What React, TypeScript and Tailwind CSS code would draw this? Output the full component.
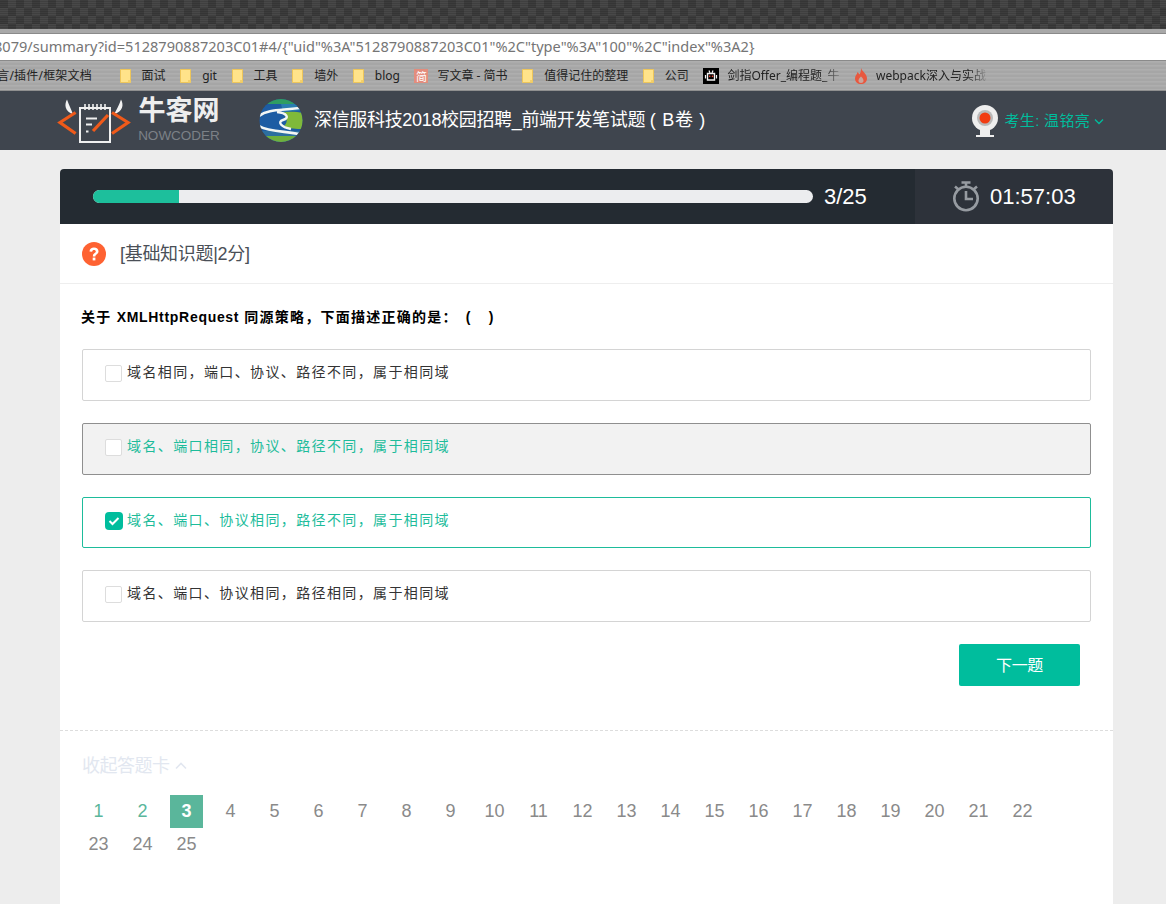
import React from "react";

const FONT = "font-['Liberation_Sans','Noto_Sans_CJK_SC',sans-serif]";

function Folder() {
  return (
    <svg width="11" height="14" viewBox="0 0 11 14" className="shrink-0">
      <path d="M0.5 0.5H10.5V13.5H0.5Z" fill="#ffe38a" stroke="#eec65a" />
      <path d="M8 11H10.5V13.5H8Z" fill="#f3cf6a" />
    </svg>
  );
}

function Bookmark({
  icon,
  label,
  className = "",
  labelClass = "",
}: {
  icon?: React.ReactNode;
  label: string;
  className?: string;
  labelClass?: string;
}) {
  return (
    <div className={`flex items-center gap-[11px] shrink-0 ${className}`}>
      {icon}
      <span className={`whitespace-nowrap ${labelClass}`}>{label}</span>
    </div>
  );
}

function Logo() {
  return (
    <svg width="74" height="46" viewBox="0 0 74 46" className="shrink-0">
      <path d="M10 1.5C7 7 8 13 16 16.5C14 11 12 7 10 1.5Z" fill="#f2f2f2" />
      <path d="M64 1.5C67 7 66 13 57 16.5C60 11 62 7 64 1.5Z" fill="#f2f2f2" />
      <path d="M18.6 14.5L3 24.5L18.6 35.5" fill="none" stroke="#f05a1a" strokeWidth="3.2" />
      <path d="M55 14.5L71 24.5L55 35.5" fill="none" stroke="#f05a1a" strokeWidth="3.2" />
      <path d="M23 10V44H53V10Z" fill="none" stroke="#f0f0f0" strokeWidth="2" />
      <path d="M28 6V12M32 6V12M36 6V12M40 6V12M44 6V12M48 6V12" stroke="#f0f0f0" strokeWidth="1.6" />
      <path d="M29 20.5H40M29 26.5H35M29 33.5H31.5" stroke="#f0f0f0" strokeWidth="2" fill="none" />
      <path d="M36 33L51 17" stroke="#f05a1a" strokeWidth="3.2" />
    </svg>
  );
}

function Globe() {
  return (
    <svg width="45" height="45" viewBox="0 0 45 45" className="shrink-0">
      <defs>
        <clipPath id="globe-clip">
          <circle cx="22" cy="22.5" r="21.5" />
        </clipPath>
      </defs>
      <g clipPath="url(#globe-clip)">
        <rect width="45" height="45" fill="#1d5ca3" />
        <rect x="0" y="0" width="45" height="6" fill="#2f9d62" />
        <path d="M22 6H45V12L24 14Z" fill="#2a7db0" />
        <path d="M22 15C30 13 38 14 45 15V31C38 31 31 31 25 28C29 25 29 18 22 15Z" fill="#7fb93a" />
        <rect x="0" y="33" width="45" height="12" fill="#2d6f9f" />
        <path d="M4 38H45V45H4Z" fill="#6fb03c" />
        <path d="M0 18C10 10 26 13 45 9" fill="none" stroke="#f3f6f4" strokeWidth="2.6" />
        <path d="M0 28C10 34 28 33 45 37" fill="none" stroke="#f3f6f4" strokeWidth="2.6" />
        <path d="M18 14C28 15 31 20 24 22C18 24 22 29 32 31" fill="none" stroke="#f3f6f4" strokeWidth="2.4" />
      </g>
    </svg>
  );
}

function Webcam() {
  return (
    <svg width="28" height="32" viewBox="0 0 28 32" className="shrink-0">
      <circle cx="14" cy="13" r="13" fill="#eeeeee" />
      <circle cx="14" cy="13" r="8" fill="#b9b9b9" />
      <circle cx="14" cy="13" r="5.5" fill="#f23c12" />
      <path d="M9 25V30H5V32H23V30H19V25Z" fill="#eeeeee" />
    </svg>
  );
}

function Timer() {
  return (
    <svg width="26" height="31" viewBox="0 0 26 31" className="shrink-0" fill="none" stroke="#969ba1" strokeWidth="2.6">
      <circle cx="13" cy="17.5" r="11.7" />
      <path d="M13 10V18H20" />
      <path d="M8.5 1.5H17.5M13 1.5V5.5" />
      <path d="M2 5.5L5.5 8.5M24 5.5L20.5 8.5" />
    </svg>
  );
}

function Option({ text, kind }: { text: string; kind: "plain" | "hover" | "checked" }) {
  const box =
    kind === "hover"
      ? "border-[#8f8f8f] bg-[#f2f2f2] h-[52px]"
      : kind === "checked"
      ? "border-[#1dbc9b] bg-white h-[51px]"
      : "border-[#d4d4d4] bg-white h-[52px]";
  const color = kind === "plain" ? "text-[#333333]" : "text-[#1dbc9b]";
  return (
    <div className={`flex items-center border rounded-[2px] pl-[22px] pb-[3px] ${box}`}>
      {kind === "checked" ? (
        <span className="flex items-center justify-center w-[18px] h-[18px] rounded-[4px] bg-[#00bd9d] shrink-0">
          <svg width="12" height="10" viewBox="0 0 12 10" fill="none" stroke="#ffffff" strokeWidth="2">
            <path d="M1.5 5L4.5 8L10.5 2" />
          </svg>
        </span>
      ) : (
        <span className="w-[17px] h-[17px] mr-[1px] rounded-[2px] border border-[#dddddd] bg-white shrink-0" />
      )}
      <span
        className={`ml-[4px] text-[14px] tracking-[1.38px] leading-[20px] whitespace-nowrap ${color} ${
          kind === "checked" ? "mb-[2px]" : "mb-[4px]"
        }`}
      >
        {text}
      </span>
    </div>
  );
}

export default function App() {
  const nums = Array.from({ length: 25 }, (_, i) => i + 1);
  return (
    <div className={`h-[904px] w-[1166px] overflow-hidden bg-[#ededed] ${FONT}`}>
      {/* browser chrome */}
      <div className="h-[29px] bg-[#3d3d3d] bg-[repeating-linear-gradient(0deg,rgba(0,0,0,0.12)_0_1px,transparent_1px_2px),conic-gradient(#484848_25%,#3c3c3c_0_50%,#484848_0_75%,#3c3c3c_0)] bg-[length:2px_2px,16px_16px]" />
      <div className="h-[4px] bg-[#a8a8a8]" />
      <div className="h-[28px] bg-white border-y border-[#8a8a8a] flex items-center overflow-hidden">
        <span className="ml-[-6px] whitespace-nowrap text-[14.56px] text-[#757575] font-['Noto_Sans',sans-serif]">
          {'8079/summary?id=5128790887203C01#4/{"uid"%3A"5128790887203C01"%2C"type"%3A"100"%2C"index"%3A2}'}
        </span>
      </div>
      <div className="h-[30px] pt-[1px] bg-[#a9a9a9] bg-[repeating-linear-gradient(0deg,#aeaeae_0_1px,#a6a6a6_1px_3px,#ababab_3px_4px)] flex items-center gap-[14.6px] text-[12px] text-[#222222] overflow-hidden whitespace-nowrap border-b border-[#8f8f8f] font-['Noto_Sans','Noto_Sans_CJK_SC',sans-serif]">
        <div className="-ml-[15px] shrink-0 tracking-[0.2px]">{"语言/插件/框架文档"}</div>
        <Bookmark icon={<Folder />} label="面试" className="ml-[13px]" />
        <Bookmark icon={<Folder />} label="git" />
        <Bookmark icon={<Folder />} label="工具" />
        <Bookmark icon={<Folder />} label="墙外" />
        <Bookmark icon={<Folder />} label="blog" />
        <Bookmark
          icon={
            <span className="flex items-center justify-center w-[14px] h-[14px] bg-[#e38d7d] text-[11px] leading-none text-white">简</span>
          }
          label="写文章 - 简书"
          className="!gap-[9px]"
        />
        <Bookmark icon={<Folder />} label="值得记住的整理" />
        <Bookmark icon={<Folder />} label="公司" />
        <Bookmark
          icon={
            <svg width="16" height="16" viewBox="0 0 16 16" className="shrink-0">
              <rect width="16" height="16" fill="#000000" />
              <path d="M4.5 5.5H11.5V12H4.5Z" fill="none" stroke="#f2f2f2" strokeWidth="1.4" />
              <path d="M6 2.5L7 5M10 2.5L9 5" stroke="#f2f2f2" strokeWidth="1.2" />
              <path d="M2.5 7V10.5M13.5 7V10.5" stroke="#f2f2f2" strokeWidth="1.2" />
              <rect x="6" y="7.5" width="1.4" height="1.6" fill="#e8432e" />
              <rect x="8.8" y="7.5" width="1.4" height="1.6" fill="#e8432e" />
            </svg>
          }
          label="剑指Offer_编程题_牛"
          className="!gap-[8px]"
          labelClass="[mask-image:linear-gradient(90deg,#000_85%,rgba(0,0,0,0.35)_100%)]"
        />
        <Bookmark
          icon={
            <svg width="14" height="16" viewBox="0 0 14 16" className="shrink-0">
              <path d="M7 0C8 3.5 13 5.5 13 10.5C13 14 10.5 16 7 16C3.5 16 1 14 1 10.5C1 7.5 3.2 6.5 3.5 4C4.5 5 5.5 6.5 5.5 6.5C6.8 4.5 7 2 7 0Z" fill="#e8583f" />
              <path d="M7 8.5C8 9.5 9.5 11 9.5 12.8C9.5 14.3 8.3 15 7 15C5.7 15 4.5 14.3 4.5 12.8C4.5 11 6 9.5 7 8.5Z" fill="#c9a59d" />
            </svg>
          }
          label="webpack深入与实战"
          className="!gap-[8px]"
          labelClass="[mask-image:linear-gradient(90deg,#000_85%,rgba(0,0,0,0.15)_100%)]"
        />
      </div>

      {/* site header */}
      <div className="h-[59px] bg-[#3f454e] flex items-center">
        <div className="ml-[57px]">
          <Logo />
        </div>
        <div className="ml-[7px] w-[82px] flex flex-col items-center">
          <span className="text-[27px] leading-[28px] font-bold text-[#eeeeee] whitespace-nowrap">牛客网</span>
          <span className="mt-[3px] text-[13.5px] leading-[16px] text-[#7c8187] whitespace-nowrap">NOWCODER</span>
        </div>
        <div className="ml-[39px]">
          <Globe />
        </div>
        <div className="ml-[10px] text-[18px] text-white whitespace-nowrap tracking-[-0.33px]">
          {"深信服科技2018校园招聘_前端开发笔试题 "}
          <span className="tracking-[0.7px]">( B卷 )</span>
        </div>
        <div className="ml-auto mr-[62px] flex items-center">
          <Webcam />
          <span className="ml-[6px] text-[15px] tracking-[0.3px] text-[#00bd9d] whitespace-nowrap mt-[2px]">考生: 温铭亮</span>
          <svg width="10" height="8" viewBox="0 0 10 8" fill="none" stroke="#00bd9d" strokeWidth="1.3" className="ml-[4px] mt-[3px]">
            <path d="M1 1.5L5 5.5L9 1.5" />
          </svg>
        </div>
      </div>

      {/* exam card */}
      <div className="mt-[19px] ml-[60px] w-[1053px] bg-white rounded-t-[4px] h-[740px] overflow-hidden">
        <div className="h-[55px] flex">
          <div className="flex-1 bg-[#242b32] flex items-center pl-[33px]">
            <div className="w-[720px] h-[13px] rounded-full bg-[#ecedef] overflow-hidden">
              <div className="w-[86px] h-full bg-[#1dbf9c]" />
            </div>
            <span className="ml-[11px] text-[22px] text-white">3/25</span>
          </div>
          <div className="w-[198px] bg-[#2d323a] flex items-center pl-[38px] gap-[11px]">
            <Timer />
            <span className="text-[22px] text-white">01:57:03</span>
          </div>
        </div>

        <div className="h-[60px] border-b border-[#eeeeee] flex items-center pl-[22px]">
          <svg width="24" height="24" viewBox="0 0 24 24" className="shrink-0">
            <circle cx="12" cy="12" r="12" fill="#fe6232" />
            <path d="M7.5 9.5C7.5 6.8 9.7 5.4 12 5.4C14.7 5.4 16.5 7 16.5 9.2C16.5 12.2 13.4 12.2 13.4 14.4H10.8C10.8 11 13.8 11 13.8 9.4C13.8 8.6 13.1 8 12 8C11 8 10.2 8.6 10.2 9.8Z" fill="#ffffff" />
            <rect x="10.7" y="15.6" width="2.7" height="2.8" fill="#ffffff" />
          </svg>
          <span className="ml-[14px] mt-[2px] text-[18px] text-[#4a4f57] tracking-[-0.3px]">[基础知识题|2分]</span>
        </div>

        <div className="px-[22px]">
          <div className="mt-[23px] h-[20px] -ml-[1px] text-[14px] leading-[20px] font-bold text-black whitespace-nowrap tracking-[1.25px]">
            {"关于 "}
            <span className="tracking-[0.7px]">XMLHttpRequest</span>
            {" 同源策略，下面描述正确的是："}
            <span className="ml-[8px]">(</span>
            <span className="ml-[17px]">)</span>
          </div>
          <div className="mt-[22px] flex flex-col gap-[22px]">
            <Option kind="plain" text="域名相同，端口、协议、路径不同，属于相同域" />
            <Option kind="hover" text="域名、端口相同，协议、路径不同，属于相同域" />
            <Option kind="checked" text="域名、端口、协议相同，路径不同，属于相同域" />
            <Option kind="plain" text="域名、端口、协议相同，路径相同，属于相同域" />
          </div>
          <div className="mt-[22px] flex justify-end pr-[11px]">
            <button className="w-[121px] h-[42px] pt-[1px] rounded-[2px] bg-[#00bd9d] text-[16px] tracking-[-0.3px] text-white">下一题</button>
          </div>
        </div>

        <div className="mt-[44px] border-t border-dashed border-[#dddddd] pl-[22px]">
          <div className="mt-[23px] flex items-center text-[18px] leading-[24px] text-[#e2e7f0] tracking-[-0.5px]">
            收起答题卡
            <svg width="12" height="8" viewBox="0 0 12 8" fill="none" stroke="#e2e7f0" strokeWidth="1.6" className="ml-[5px]">
              <path d="M1 6.5L6 1.5L11 6.5" />
            </svg>
          </div>
          <div className="mt-[17px] flex flex-wrap w-[1000px]">
            {nums.map((n) => (
              <div
                key={n}
                className={`w-[33px] h-[33px] mr-[11px] flex items-center justify-center text-[18px] ${
                  n === 3 ? "bg-[#5ab69b] text-white font-bold" : n < 3 ? "text-[#5ab69b]" : "text-[#8a8a8a]"
                }`}
              >
                {n}
              </div>
            ))}
          </div>
        </div>
      </div>
    </div>
  );
}
